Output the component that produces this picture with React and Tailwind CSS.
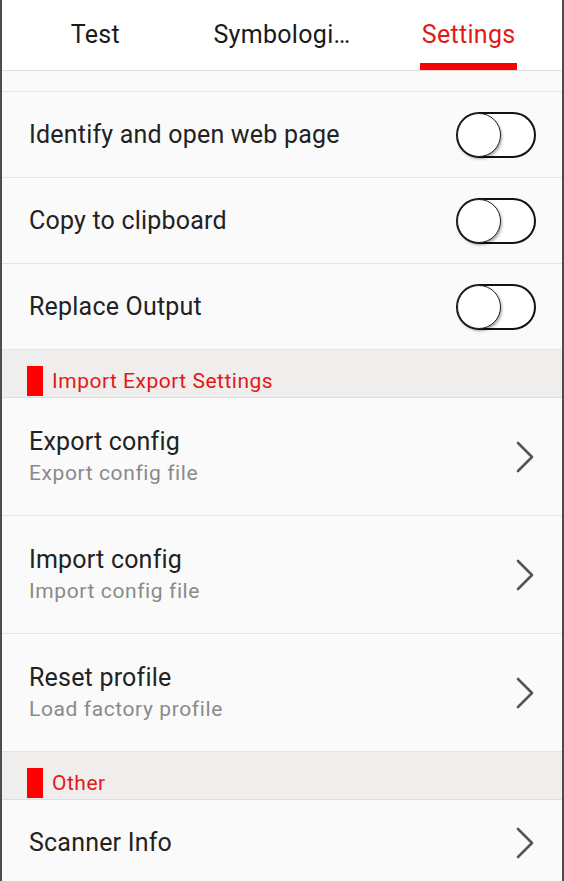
import React from "react";

function Toggle() {
    return (
        <div className="relative w-[80px] h-[46px] rounded-full border-2 border-[#111] bg-white">
            <div className="absolute left-[-1px] top-[-1px] w-[44px] h-[44px] rounded-full border-[1.5px] border-[#222] bg-white shadow-[1px_2px_3px_rgba(0,0,0,0.35)]"></div>
        </div>
    )
}

function Chevron() {
    return (
        <svg width="22" height="34" viewBox="0 0 22 34" fill="none">
            <path d="M4 3 L18 17 L4 31" stroke="#555" strokeWidth="2.6" strokeLinecap="round" strokeLinejoin="round" />
        </svg>
    )
}

function ToggleRow({ label }) {
    return (
        <div className="flex items-center justify-between h-[86px] pl-[27px] pr-[26px] border-b border-[#e3e3e3]">
            <p className="text-[25px] tracking-[0.2px] text-[#222]">{label}</p>
            <Toggle />
        </div>
    )
}

function LinkRow({ title, sub }) {
    return (
        <div className="flex items-center justify-between h-[118px] pl-[27px] pr-[26px] border-b border-[#e3e3e3]">
            <div className="flex flex-col">
                <p className="text-[25px] leading-[30px] tracking-[0.2px] text-[#222]">{title}</p>
                <p className="text-[21px] leading-[28px] tracking-[0.6px] text-[#8a8a8a] mt-[2px]">{sub}</p>
            </div>
            <Chevron />
        </div>
    )
}

function SectionHeader({ label }) {
    return (
        <div className="flex items-end h-[48px] bg-[#efeeed] border-b border-[#dedede] pl-[25px] pb-[1px]">
            <div className="w-[16px] h-[30px] bg-[#ff0000]"></div>
            <p className="text-[21px] leading-[28px] tracking-[0.5px] text-[#e31818] ml-[9px] mb-[1px]">{label}</p>
        </div>
    )
}

export default function App() {
    return (
        <div className="h-[881px] overflow-hidden bg-[#fafafa] border-x-2 border-[#4d4d4d] font-['Roboto',sans-serif]">
            <div className="flex h-[71px] bg-white border-b border-[#dcdcdc]">
                <div className="flex-1 flex justify-center">
                    <p className="text-[25px] tracking-[0.3px] text-[#1a1a1a] mt-[16px]">Test</p>
                </div>
                <div className="flex-1 flex justify-center">
                    <p className="text-[25px] tracking-[0.3px] text-[#1a1a1a] mt-[16px]">Symbologi…</p>
                </div>
                <div className="flex-1 flex flex-col items-center">
                    <p className="text-[25px] tracking-[0.3px] text-[#e31818] mt-[16px]">Settings</p>
                    <div className="w-[97px] h-[7px] bg-[#ff0000] mt-auto"></div>
                </div>
            </div>
            <div className="h-[21px] border-b border-[#e3e3e3]"></div>
            <ToggleRow label="Identify and open web page" />
            <ToggleRow label="Copy to clipboard" />
            <ToggleRow label="Replace Output" />
            <SectionHeader label="Import Export Settings" />
            <LinkRow title="Export config" sub="Export config file" />
            <LinkRow title="Import config" sub="Import config file" />
            <LinkRow title="Reset profile" sub="Load factory profile" />
            <SectionHeader label="Other" />
            <div className="flex items-center justify-between h-[86px] pl-[27px] pr-[26px]">
                <p className="text-[25px] tracking-[0.2px] text-[#222]">Scanner Info</p>
                <Chevron />
            </div>
        </div>
    )
}
